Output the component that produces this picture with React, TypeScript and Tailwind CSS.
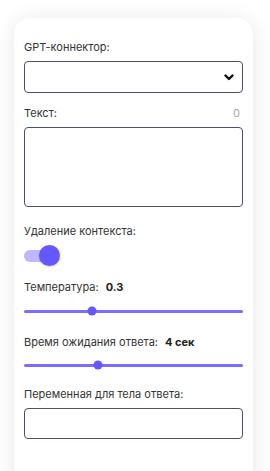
import { useState } from "react";

function Slider({ percent }: { percent: number }) {
  return (
    <div className="relative h-[10px] flex items-center">
      <div className="h-[3px] w-full rounded-full bg-[#7a6dff]" />
      <div
        className="absolute top-1/2 h-[9px] w-[9px] -translate-x-1/2 -translate-y-1/2 rounded-full bg-[#6457ff]"
        style={{ left: `${percent}%` }}
      />
    </div>
  );
}

export default function App() {
  const [text, setText] = useState("");

  return (
    <div className="h-[471px] overflow-hidden bg-white font-['Inter',sans-serif] text-[#333]">
      <div className="ml-[14px] mt-[18px] w-[239px] h-[480px] rounded-[16px] bg-white shadow-[0_2px_22px_rgba(0,0,0,0.10)] px-[10px] pt-[22px]">
        {/* GPT connector */}
        <div className="text-[11px] leading-[14px] h-[14px]">GPT-коннектор:</div>
        <div className="relative mt-[7px] h-[32px] rounded-[4px] border border-[#4e4d6e]">
          <svg
            className="absolute right-[8px] top-[12px]"
            width="10"
            height="7"
            viewBox="0 0 10 7"
            fill="none"
          >
            <path d="M1.5 1.5 L5 5 L8.5 1.5" stroke="#111" strokeWidth="2.4" strokeLinecap="round" strokeLinejoin="round" />
          </svg>
        </div>

        {/* Text */}
        <div className="mt-[13px] flex justify-between text-[11px] leading-[14px] h-[14px]">
          <span>Текст:</span>
          <span className="pr-[3px] text-[#aaa]">{text.length}</span>
        </div>
        <textarea
          value={text}
          onChange={(e) => setText(e.target.value)}
          className="mt-[7px] block h-[80px] w-full resize-none rounded-[4px] border border-[#4e4d6e] outline-none"
        />

        {/* Context removal */}
        <div className="mt-[17px] text-[11px] leading-[14px] h-[14px]">Удаление контекста:</div>
        <div className="relative mt-[8px] h-[20px] w-[37px] flex items-center">
          <div className="h-[12px] w-[33px] rounded-full bg-[#bdb8ff]" />
          <div className="absolute left-[15px] top-[-1px] h-[21px] w-[21px] rounded-full bg-[#6457ff] shadow-[0_1px_2px_rgba(0,0,0,0.2)]" />
        </div>

        {/* Temperature */}
        <div className="mt-[14px] flex gap-[7px] text-[11px] leading-[14px] h-[14px]">
          <span>Температура:</span>
          <span className="font-bold text-[#222]">0.3</span>
        </div>
        <div className="mt-[12px]">
          <Slider percent={31} />
        </div>

        {/* Timeout */}
        <div className="mt-[19px] flex gap-[7px] text-[11px] leading-[14px] h-[14px]">
          <span>Время ожидания ответа:</span>
          <span className="font-bold text-[#222]">4 сек</span>
        </div>
        <div className="mt-[11px]">
          <Slider percent={34} />
        </div>

        {/* Response variable */}
        <div className="mt-[17px] text-[11px] leading-[14px] h-[14px]">Переменная для тела ответа:</div>
        <input className="mt-[7px] block h-[31px] w-full rounded-[4px] border border-[#4e4d6e] outline-none" />
      </div>
    </div>
  );
}
